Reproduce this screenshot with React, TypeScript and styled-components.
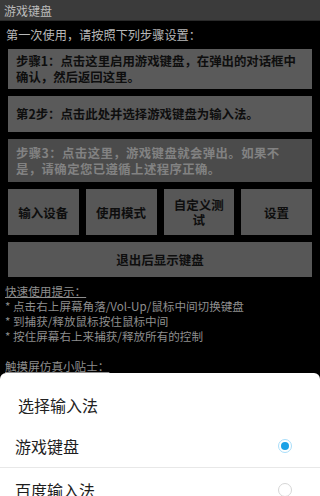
import React, { useState } from 'react';
import styled, { createGlobalStyle } from 'styled-components';

const GlobalStyle = createGlobalStyle`
  html, body {
    margin: 0;
    padding: 0;
    background: #000;
  }
  * {
    box-sizing: border-box;
  }
`;

const Screen = styled.div`
  position: relative;
  width: 320px;
  height: 496px;
  overflow: hidden;
  background: #000;
  font-family: "Noto Sans CJK SC", "Noto Sans", sans-serif;
`;

const TitleBar = styled.div`
  height: 21px;
  padding: 0 4px;
  display: flex;
  align-items: center;
  background: #3b3b3b;
  border-bottom: 1px solid #2a2a2a;
  color: #bcbcbc;
  font-size: 12px;
`;

const Content = styled.div`
  padding: 0 8px;
  display: flex;
  flex-direction: column;
  gap: 7px;
`;

const Intro = styled.div`
  height: 28px;
  margin: 0 -2px -7px;
  display: flex;
  align-items: center;
  color: #b8b8b8;
  font-size: 12.2px;
`;

const StepBox = styled.div<{ $disabled?: boolean; $height: number; $spacing?: number }>`
  min-height: ${p => p.$height}px;
  padding: 4px 12px 4px 8px;
  display: flex;
  align-items: center;
  background: ${p => (p.$disabled ? '#4b4b4b' : '#5a5a5a')};
  color: ${p => (p.$disabled ? '#828282' : '#0e0e0e')};
  font-size: 12.4px;
  font-weight: 700;
  letter-spacing: ${p => p.$spacing ?? 0}px;
  line-height: 16px;
`;

const ButtonRow = styled.div`
  display: grid;
  grid-template-columns: repeat(4, 1fr);
  gap: 7px;
`;

const ToolButton = styled.div<{ $height: number }>`
  height: ${p => p.$height}px;
  padding: 0 5px;
  display: flex;
  align-items: center;
  justify-content: center;
  text-align: center;
  background: #575757;
  color: #0e0e0e;
  font-size: 12.5px;
  font-weight: 700;
  line-height: 15px;
`;

const Hints = styled.div`
  padding: 7px 5px 0;
  color: #8e8e8e;
  font-size: 11.6px;
  line-height: 15px;
`;

const HintTitle = styled.div`
  text-decoration: underline;
`;

const HintLine = styled.div<{ $gap?: boolean }>`
  margin-top: ${p => (p.$gap ? '15px' : '0')};
  white-space: nowrap;
`;

const Sheet = styled.div`
  position: absolute;
  left: 0;
  right: 0;
  top: 373px;
  bottom: 0;
  background: #fff;
  border-radius: 6px 6px 0 0;
`;

const SheetTitle = styled.div`
  padding: 22px 18px 9px;
  color: #222;
  font-size: 16px;
  line-height: 20px;
`;

const Option = styled.div<{ $last?: boolean }>`
  height: 44px;
  padding: 0 28px 0 15px;
  display: flex;
  align-items: center;
  justify-content: space-between;
  border-bottom: ${p => (p.$last ? 'none' : '1px solid #e8e8e8')};
  color: #1e1e1e;
  font-size: 16px;
`;

const Radio = styled.span<{ $checked: boolean }>`
  width: 14px;
  height: 14px;
  border-radius: 50%;
  display: flex;
  align-items: center;
  justify-content: center;
  border: 1.5px solid ${p => (p.$checked ? '#a9defa' : '#d6d6d6')};

  &::after {
    content: '';
    width: 8px;
    height: 8px;
    border-radius: 50%;
    background: ${p => (p.$checked ? '#1aa1e6' : 'transparent')};
  }
`;

const App: React.FC = () => {
  const [method, setMethod] = useState('game');

  const methods = [
    { id: 'game', label: '游戏键盘' },
    { id: 'baidu', label: '百度输入法' },
  ];

  return (
    <Screen>
      <GlobalStyle />
      <TitleBar>游戏键盘</TitleBar>

      <Content>
        <Intro>第一次使用，请按照下列步骤设置：</Intro>
        <StepBox $height={40}>步骤1：点击这里启用游戏键盘，在弹出的对话框中确认，然后返回这里。</StepBox>
        <StepBox $height={36}>第2步：点击此处并选择游戏键盘为输入法。</StepBox>
        <StepBox $height={43} $disabled $spacing={0.4}>
          步骤3：点击这里，游戏键盘就会弹出。如果不是，请确定您已遵循上述程序正确。
        </StepBox>

        <ButtonRow>
          <ToolButton $height={46}>输入设备</ToolButton>
          <ToolButton $height={46}>使用模式</ToolButton>
          <ToolButton $height={46}>自定义测试</ToolButton>
          <ToolButton $height={46}>设置</ToolButton>
        </ButtonRow>
        <ToolButton $height={35}>退出后显示键盘</ToolButton>
      </Content>

      <Hints>
        <HintTitle>快速使用提示：</HintTitle>
        <HintLine>* 点击右上屏幕角落/Vol-Up/鼠标中间切换键盘</HintLine>
        <HintLine>* 到捕获/释放鼠标按住鼠标中间</HintLine>
        <HintLine>* 按住屏幕右上来捕获/释放所有的控制</HintLine>
        <HintLine $gap>
          <HintTitle>触摸屏仿真小贴士：</HintTitle>
        </HintLine>
      </Hints>

      <Sheet>
        <SheetTitle>选择输入法</SheetTitle>
        {methods.map((m, i) => (
          <Option key={m.id} $last={i === methods.length - 1} onClick={() => setMethod(m.id)}>
            {m.label}
            <Radio $checked={method === m.id} />
          </Option>
        ))}
      </Sheet>
    </Screen>
  );
};

export default App;
